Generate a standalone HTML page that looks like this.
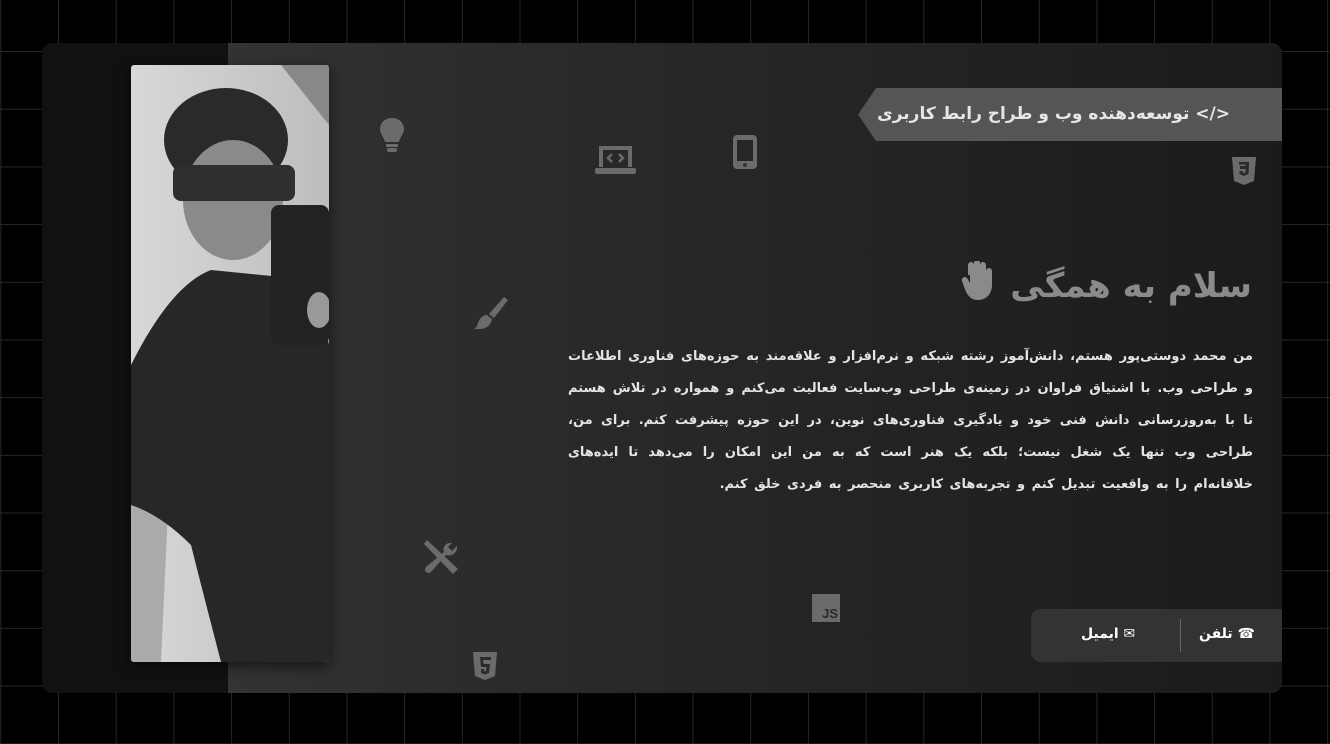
<!DOCTYPE html>
<html><head><meta charset="utf-8">
<style>
html,body{margin:0;padding:0;}
body{width:1330px;height:744px;overflow:hidden;background:#000;position:relative;
background-image:linear-gradient(#1e2a2a 1px,transparent 1px),linear-gradient(90deg,#1e2a2a 1px,transparent 1px);
background-size:57.7px 57.7px;background-position:0 51px,58px 0;font-family:"DejaVu Sans","Liberation Sans",sans-serif;}
.card{position:absolute;left:42px;top:43px;width:1240px;height:650px;border-radius:10px;overflow:hidden;
background:linear-gradient(90deg,#111 0,#111 186px,#333 186px,#2a2a2a 500px,#1b1b1b 1240px);}
.photo{position:absolute;left:89px;top:22px;width:198px;height:597px;border-radius:3px;overflow:hidden;box-shadow:0 4px 14px rgba(0,0,0,.6);}
.ic{position:absolute;fill:#6b6b6b;}
.tag{position:absolute;left:816px;top:45px;width:424px;height:53px;background:#555;clip-path:polygon(18px 0,100% 0,100% 100%,18px 100%,0 50%);
color:#e6e6e6;font-weight:bold;font-size:17px;direction:rtl;line-height:53px;padding-right:52px;box-sizing:border-box;}
h1{position:absolute;right:30px;top:218px;margin:0;color:#8a8a8a;font-size:34px;font-weight:bold;direction:rtl;}
p{position:absolute;left:526px;top:298px;width:685px;margin:0;color:#e4e4e4;font-size:13px;font-weight:bold;line-height:32px;direction:rtl;text-align:justify;word-spacing:2px;}
.btns{position:absolute;left:989px;top:566px;width:260px;height:53px;background:#333;border-radius:10px 0 0 10px;color:#fff;font-weight:bold;font-size:14px;}
.btns span{position:absolute;top:17px;direction:rtl;}
</style></head><body>
<div class="card">
 <div class="photo">
  <svg width="198" height="597" viewBox="0 0 198 597">
   <defs><linearGradient id="bg" x1="0" x2="1"><stop offset="0" stop-color="#d8d8d8"/><stop offset="1" stop-color="#bdbdbd"/></linearGradient></defs>
   <rect width="198" height="597" fill="url(#bg)"/>
   <path d="M0 420 L40 380 L30 597 L0 597Z" fill="#aaa"/>
   <path d="M150 0 L198 60 L198 0Z" fill="#888"/>
   <ellipse cx="95" cy="75" rx="62" ry="52" fill="#2a2a2a"/>
   <ellipse cx="102" cy="135" rx="50" ry="60" fill="#8a8a8a"/>
   <rect x="42" y="100" width="122" height="36" rx="8" fill="#2f2f2f"/>
   <path d="M0 300 Q40 220 80 205 L150 212 Q190 240 198 280 L198 597 L90 597 Q70 520 60 480 Q30 450 0 440Z" fill="#272727"/>
   <rect x="140" y="140" width="58" height="140" rx="8" fill="#222"/>
   <ellipse cx="188" cy="245" rx="12" ry="18" fill="#999"/>
  </svg>
 </div>
 <svg class="ic" style="left:338px;top:75px" width="24" height="34" viewBox="0 0 24 34"><path d="M12 0C5 0 0 5 0 11c0 5 4 8 5 13h14c1-5 5-8 5-13C24 5 19 0 12 0z"/><rect x="6" y="26" width="12" height="3"/><rect x="7" y="30" width="10" height="4" rx="2"/></svg>
 <svg class="ic" style="left:553px;top:103px" width="41" height="29" viewBox="0 0 41 29"><path d="M4 0h33v21h-4V4H8v17H4z"/><rect x="0" y="22" width="41" height="6" rx="2"/><path d="M17 8l-4 4 4 4M24 8l4 4-4 4" stroke="#6b6b6b" stroke-width="2.5" fill="none"/></svg>
 <svg class="ic" style="left:691px;top:92px" width="24" height="34" viewBox="0 0 24 34"><path d="M4 0h16a4 4 0 014 4v26a4 4 0 01-4 4H4a4 4 0 01-4-4V4a4 4 0 014-4zM4 5v21h16V5z"/><circle cx="12" cy="30" r="2" fill="#333"/></svg>
 <svg class="ic" style="left:432px;top:254px" width="34" height="34" viewBox="0 0 34 34"><path d="M30 0l4 3-14 18-5-4z"/><path d="M13 18l5 4c-1 6-5 10-13 10H0c4-2 3-6 6-10 2-3 5-4 7-4z"/></svg>
 <svg class="ic" style="left:382px;top:497px" width="34" height="34" viewBox="0 0 34 34"><path d="M3 0l31 29-5 5L0 4z"/><path d="M33 6l-5 5-4-4 4-4C22 2 18 7 20 12L2 27a3 3 0 005 5l15-17c6 2 12-3 11-9z"/></svg>
 <div style="position:absolute;left:770px;top:551px;width:28px;height:28px;background:#6b6b6b;color:#2a2a2a;font:bold 13px 'Liberation Sans',sans-serif;"><span style="position:absolute;right:2px;bottom:1px">JS</span></div>
 <svg class="ic" style="left:431px;top:609px" width="24" height="28" viewBox="0 0 24 28"><path d="M0 0h24l-2 24-10 4-10-4z"/><path d="M7 5h11v3H10l.5 4H17l-1 9-4 1.5-4-1.5V17h3v2l1 .5 1-.5.5-4H8z" fill="#2a2a2a"/></svg>
 <svg class="ic" style="left:1190px;top:114px" width="24" height="28" viewBox="0 0 24 28"><path d="M0 0h24l-2 24-10 4-10-4z"/><path d="M7 5h10l-.5 12-4.5 2-4.5-2V14h3v1.5l1.5.5 1.5-.5.3-3.5H8v-3h5.6l.2-1.5H7z" fill="#2a2a2a"/></svg>
 <div class="tag">&lt;/&gt; توسعه‌دهنده وب و طراح رابط کاربری</div>
 <h1>سلام به همگی <svg width="40" height="40" viewBox="0 0 40 40" style="vertical-align:-4px;fill:#8a8a8a"><path d="M10 14V4a3 3 0 016 0v10-12a3 3 0 016 0v12-10a3 3 0 016 0v12-6a3 3 0 016 0v14c0 9-6 15-14 15-6 0-9-3-12-8L4 20a3 3 0 015-3l3 5V14z"/></svg></h1>
 <p>من محمد دوستی‌پور هستم، دانش‌آموز رشته شبکه و نرم‌افزار و علاقه‌مند به حوزه‌های فناوری اطلاعات و طراحی وب. با اشتیاق فراوان در زمینه‌ی طراحی وب‌سایت فعالیت می‌کنم و همواره در تلاش هستم تا با به‌روزرسانی دانش فنی خود و یادگیری فناوری‌های نوین، در این حوزه پیشرفت کنم. برای من، طراحی وب تنها یک شغل نیست؛ بلکه یک هنر است که به من این امکان را می‌دهد تا ایده‌های خلاقانه‌ام را به واقعیت تبدیل کنم و تجربه‌های کاربری منحصر به فردی خلق کنم.</p>
 <div class="btns">
  <span style="left:168px">☎ تلفن</span>
  <div style="position:absolute;left:149px;top:10px;width:1px;height:33px;background:#666"></div>
  <span style="left:50px">✉ ایمیل</span>
 </div>
</div>
</body></html>
